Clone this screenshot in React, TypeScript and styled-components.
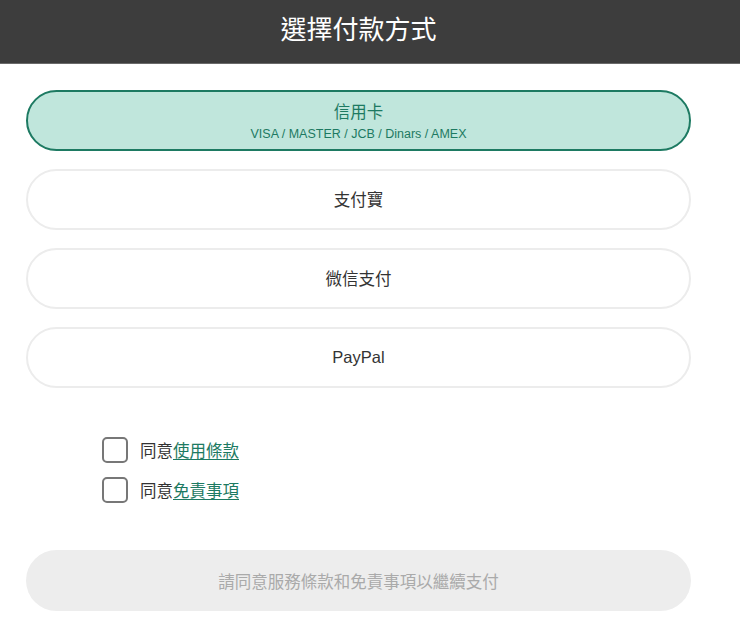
import React, { useState } from 'react'
import styled, { createGlobalStyle } from 'styled-components'

const GlobalStyle = createGlobalStyle`
  html, body {
    margin: 0;
    padding: 0;
    background: #fff;
    font-family: "Liberation Sans", Arial, "Noto Sans CJK TC", sans-serif;
  }
`

const Header = styled.header`
  height: 64px;
  background: #3d3d3d;
  border-bottom: 1px solid #6a6a6a;
  display: flex;
  align-items: center;
  justify-content: center;
  padding: 0 23px 8px 0;
  box-sizing: border-box;
`

const Title = styled.h1`
  margin: 0;
  color: #fff;
  font-size: 26px;
  font-weight: 400;
`

const Main = styled.main`
  width: 665px;
  margin-left: 26px;
  padding-top: 26px;
`

const OptionList = styled.div`
  display: flex;
  flex-direction: column;
  gap: 18px;
`

const Option = styled.button<{ $active?: boolean }>`
  height: 61px;
  width: 100%;
  box-sizing: border-box;
  border-radius: 31px;
  border: 2px solid ${p => (p.$active ? '#1d7a62' : '#ececec')};
  background: ${p => (p.$active ? '#c0e6dc' : '#fff')};
  color: ${p => (p.$active ? '#1d7a62' : '#333')};
  font-family: inherit;
  font-size: 16.5px;
  display: flex;
  flex-direction: column;
  align-items: center;
  justify-content: center;
  gap: 4px;
  cursor: pointer;
  padding: 0 0 1px;
`

const OptionSub = styled.span`
  font-size: 12.5px;
`

const Agreements = styled.div`
  display: flex;
  flex-direction: column;
  gap: 14px;
  margin-top: 49px;
  padding-left: 76px;
`

const AgreeRow = styled.label`
  display: flex;
  align-items: center;
  gap: 12px;
  font-size: 16.5px;
  color: #333;
  cursor: pointer;
`

const Box = styled.span<{ $checked: boolean }>`
  width: 26px;
  height: 26px;
  box-sizing: border-box;
  border: 2px solid #777;
  border-radius: 5px;
  background: ${p => (p.$checked ? '#1d7a62' : '#fff')};
`

const TermsLink = styled.a`
  color: #1d7a62;
  text-decoration: underline;
  text-underline-offset: 2px;
`

const PayButton = styled.button`
  margin-top: 47px;
  height: 61px;
  width: 100%;
  border: none;
  border-radius: 31px;
  background: #ededed;
  color: #aaa;
  font-family: inherit;
  font-size: 16.5px;
`

const methods = [
  { name: '信用卡', sub: 'VISA / MASTER / JCB / Dinars / AMEX' },
  { name: '支付寶' },
  { name: '微信支付' },
  { name: 'PayPal' },
]

export default function App() {
  const [selected, setSelected] = useState(0)
  const [agreed, setAgreed] = useState([false, false])

  const toggle = (i: number) => setAgreed(a => a.map((v, j) => (j === i ? !v : v)))

  return (
    <>
      <GlobalStyle />
      <Header>
        <Title>選擇付款方式</Title>
      </Header>
      <Main>
        <OptionList>
          {methods.map((m, i) => (
            <Option key={m.name} $active={selected === i} onClick={() => setSelected(i)}>
              <span>{m.name}</span>
              {m.sub && <OptionSub>{m.sub}</OptionSub>}
            </Option>
          ))}
        </OptionList>
        <Agreements>
          {['使用條款', '免責事項'].map((t, i) => (
            <AgreeRow key={t} onClick={() => toggle(i)}>
              <Box $checked={agreed[i]} />
              <span>
                同意<TermsLink href="#" onClick={e => e.preventDefault()}>{t}</TermsLink>
              </span>
            </AgreeRow>
          ))}
        </Agreements>
        <PayButton disabled>請同意服務條款和免責事項以繼續支付</PayButton>
      </Main>
    </>
  )
}
